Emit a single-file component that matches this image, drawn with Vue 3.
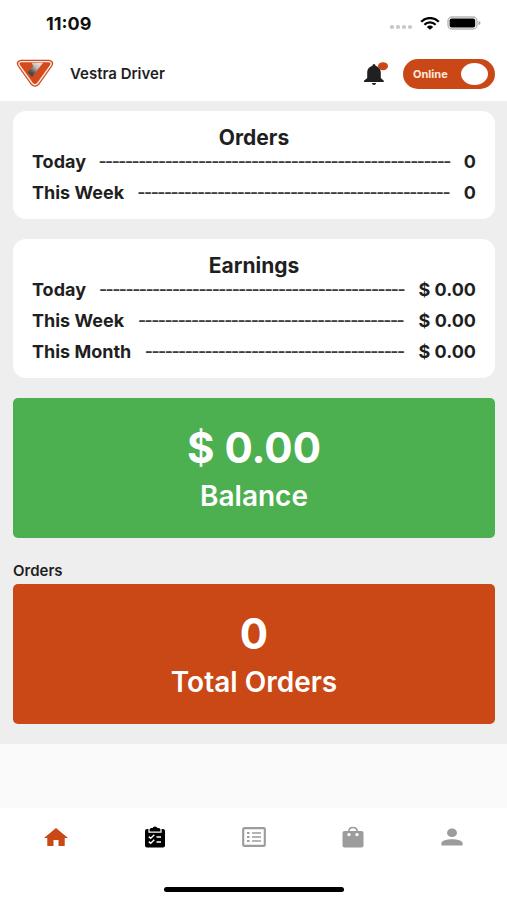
<script setup>
import { ref } from 'vue'

const online = ref(true)

const summaries = [
  {
    title: 'Orders',
    rows: [
      { label: 'Today', value: '0', dashes: 53 },
      { label: 'This Week', value: '0', dashes: 47 },
    ],
  },
  {
    title: 'Earnings',
    rows: [
      { label: 'Today', value: '$ 0.00', dashes: 46 },
      { label: 'This Week', value: '$ 0.00', dashes: 40 },
      { label: 'This Month', value: '$ 0.00', dashes: 39 },
    ],
  },
]
</script>

<template>
  <div class="app">
    <div class="status">
      <span class="time">11:09</span>
      <div class="signals">
        <svg width="24" height="6" viewBox="0 0 24 6" fill="#c9c9c9" aria-hidden="true">
          <ellipse cx="3" cy="3" rx="2.2" ry="2" />
          <ellipse cx="9" cy="3" rx="2.2" ry="2" />
          <ellipse cx="15" cy="3" rx="2.2" ry="2" />
          <ellipse cx="21" cy="3" rx="2.2" ry="2" />
        </svg>
        <svg class="wifi" width="20" height="13" viewBox="0 0 20 13" fill="none" stroke="#000" stroke-width="2.3" aria-hidden="true">
          <path d="M1.2 4.8C6-.2 14-.2 18.800 4.800" />
          <path d="M4.400 7.700C7.500 4.600 12.500 4.600 15.600 7.700" />
          <path d="M6.800 9.900Q10 7.300 13.200 9.900L10 12.800Z" fill="#000" stroke="none" />
        </svg>
        <svg class="battery" width="34" height="14" viewBox="0 0 34 14" aria-hidden="true">
          <rect x="1" y="1" width="29" height="12" rx="4" fill="#fff" stroke="#b5b5b5" stroke-width="1.400" />
          <rect x="2.600" y="2.600" width="25.600" height="8.800" rx="2" fill="#000" />
          <path d="M31.500 5Q33.500 5.500 33.500 7T31.500 9Z" fill="#a5a5a5" />
        </svg>
      </div>
    </div>

    <header class="header">
      <svg class="logo" width="38" height="29" viewBox="0 0 38 29" aria-hidden="true">
        <defs>
          <linearGradient id="sheen" x1="1" y1="0" x2="0.200" y2="1">
            <stop offset="0" stop-color="#f4f0ee" />
            <stop offset="0.400" stop-color="#c2bfbe" />
            <stop offset="0.720" stop-color="#5a5654" />
            <stop offset="1" stop-color="#3a3634" />
          </linearGradient>
        </defs>
        <path d="M5 .8H33Q39 1.800 36.400 7L23.500 25.200Q19 30.300 14.500 25.200L1.600 7Q-1 1.800 5 .8Z" fill="#cc4a1d" />
        <path d="M5.500 2.600H32.500Q36.500 3 34.600 6.500L22 24Q19 27.500 16 24L3.400 6.500Q1.500 3 5.500 2.600Z" fill="#d34a1c" stroke="#fbe9e3" stroke-width="1.400" />
        <path d="M15.500 3.800H27L16 18L11.500 13L17.500 7.500Z" fill="url(#sheen)" />
      </svg>
      <h1 class="brand">Vestra Driver</h1>
      <button class="bell" type="button" aria-label="Notifications">
        <svg width="26" height="24" viewBox="0 0 26 24" aria-hidden="true">
          <path d="M11 3.500C8.600 3.500 4.200 5.500 4.200 10.500V16L1 18.800V20H20.800V18.800L17.800 16V10.500C17.800 5.500 13.400 3.500 11 3.500Z" fill="#202020" />
          <path d="M9.600 3.600Q9.600 2 11 2T12.400 3.600L12.400 5H9.600Z" fill="#202020" />
          <path d="M8.800 21H13.200Q12.800 23 11 23T8.800 21Z" fill="#202020" />
          <ellipse cx="20" cy="4.200" rx="5" ry="4" fill="#cb4718" />
        </svg>
      </button>
      <label class="switch">
        <input v-model="online" class="check" type="checkbox" role="switch" />
        <span>{{ online ? 'Online' : 'Offline' }}</span>
        <span class="knob"></span>
      </label>
    </header>

    <main class="content">
      <section v-for="card in summaries" :key="card.title" class="card">
        <h2 class="title">{{ card.title }}</h2>
        <dl class="rows">
          <div v-for="row in card.rows" :key="row.label" class="row">
            <dt>{{ row.label }}</dt>
            <span class="leader" aria-hidden="true">{{ '-'.repeat(row.dashes) }}</span>
            <dd>{{ row.value }}</dd>
          </div>
        </dl>
      </section>

      <section class="tile balance">
        <strong class="figure">$ 0.00</strong>
        <span class="caption">Balance</span>
      </section>

      <section class="group">
        <h2 class="subtitle">Orders</h2>
        <div class="tile total">
          <strong class="figure">0</strong>
          <span class="caption">Total Orders</span>
        </div>
      </section>
    </main>

    <nav class="nav">
      <div class="tabs">
        <a href="#home" aria-label="Home">
          <svg width="26" height="20" viewBox="0 0 26 20" fill="#c94816" aria-hidden="true">
            <path d="M10.500 19V13H15.500V19H21.700V11H25L13 1L1 11H4.300V19Z" />
          </svg>
        </a>
        <a href="#tasks" aria-label="Tasks">
          <svg width="20" height="22" viewBox="0 0 20 22" aria-hidden="true">
            <rect x="0" y="3" width="20" height="18.500" rx="2" fill="#000" />
            <path d="M4 2.500V6.200H16V2.500" fill="none" stroke="#fff" stroke-width="1.200" />
            <path d="M5 5V3Q5 2 6.500 2H7.600Q8 .4 10 .4T12.400 2H13.500Q15 2 15 3V5Z" fill="#000" />
            <path d="M3.800 10.600L5.700 12.200L9.300 8.800M3.800 15.600L5.700 17.200L9.300 13.800M11.500 11H16M11.500 16H16" fill="none" stroke="#fff" stroke-width="1.400" />
          </svg>
        </a>
        <a href="#list" aria-label="Order list">
          <svg width="24" height="20" viewBox="0 0 24 20" fill="none" stroke="#9c9c9c" aria-hidden="true">
            <rect x="1.200" y="1.100" width="21.600" height="17.800" rx="1" stroke-width="2.100" />
            <path d="M10 6H19M10 10H19M10 14H19" stroke-width="1.700" />
            <path d="M5 6H7.500M5 10H7.500M5 14H7.500" stroke-width="1.800" />
          </svg>
        </a>
        <a href="#bag" aria-label="Shop">
          <svg width="22" height="22" viewBox="0 0 22 22" aria-hidden="true">
            <rect x=".5" y="5" width="21" height="16.500" rx="2" fill="#9c9c9c" />
            <path d="M6.800 8V5Q7 1.500 11 1.500T15.200 5V8" fill="none" stroke="#9c9c9c" stroke-width="1.700" />
            <ellipse cx="7" cy="8.600" rx="1.700" ry="1.600" fill="#fff" />
            <ellipse cx="15" cy="8.600" rx="1.700" ry="1.600" fill="#fff" />
          </svg>
        </a>
        <a href="#profile" aria-label="Profile">
          <svg width="22" height="18" viewBox="0 0 22 18" fill="#9c9c9c" aria-hidden="true">
            <ellipse cx="11" cy="4.700" rx="5" ry="4.300" />
            <path d="M.4 17.500V15.300C.4 12.400 6 11.200 11 11.200S21.600 12.400 21.600 15.300V17.500Z" />
          </svg>
        </a>
      </div>
      <div class="indicator"></div>
    </nav>
  </div>
</template>

<style>
body {
  margin: 0;
  background: #fafafa;
}
</style>

<style scoped>
.app {
  display: flex;
  flex-direction: column;
  min-height: 100vh;
  font-family: Inter, Roboto, sans-serif;
  font-weight: 600;
  color: #1f1f1f;
}

h1, h2, dl, dd {
  margin: 0;
  font-weight: inherit;
}

.status {
  display: flex;
  justify-content: space-between;
  align-items: center;
  height: 46px;
  padding: 0 26px 0 46px;
  background: #fff;
}

.time {
  font-size: 18px;
  font-weight: 700;
  color: #111;
}

.signals {
  display: flex;
  align-items: center;
  gap: 7px;
}

.signals svg:first-child {
  margin-top: 8px;
}

.header {
  display: flex;
  align-items: center;
  height: 55px;
  padding: 0 12px 0 16px;
  background: #fff;
}

.brand {
  flex: 1;
  margin-left: 16px;
  font-size: 15px;
}

.bell {
  display: flex;
  padding: 0;
  border: 0;
  background: none;
}

.switch {
  display: flex;
  align-items: center;
  justify-content: space-between;
  box-sizing: border-box;
  width: 92px;
  height: 30px;
  margin-left: 14px;
  padding: 0 7px 0 10px;
  border-radius: 15px;
  background: #c94816;
  color: #ffe9df;
  font-size: 11px;
  font-weight: 700;
}

.check {
  position: absolute;
  opacity: 0;
}

.knob {
  width: 27px;
  height: 22px;
  border-radius: 50%;
  background: #fff;
}

.content {
  display: flex;
  flex-direction: column;
  gap: 20px;
  padding: 10px 12px 20px 13px;
  background: #eee;
}

.card {
  padding: 15px 19px;
  border-radius: 13px;
  background: #fff;
}

.title {
  font-size: 21px;
  font-weight: 700;
  line-height: 24px;
  text-align: center;
}

.rows {
  display: flex;
  flex-direction: column;
  gap: 8px;
}

.row {
  display: flex;
  justify-content: space-between;
  font-size: 18px;
  font-weight: 700;
  line-height: 23px;
  white-space: nowrap;
}

.leader {
  font-family: Roboto, sans-serif;
  font-size: 24px;
  font-weight: 400;
  color: #3c3c3c;
}

.tile {
  display: flex;
  flex-direction: column;
  align-items: center;
  justify-content: center;
  height: 140px;
  border-radius: 5px;
  color: #fff;
}

.balance {
  background: #4caf50;
}

.total {
  background: #c94816;
}

.figure {
  font-size: 42px;
  font-weight: 700;
  line-height: 56px;
}

.caption {
  font-size: 28px;
  line-height: 40px;
}

.subtitle {
  font-size: 15px;
  line-height: 26px;
}

.nav {
  box-sizing: border-box;
  height: 92px;
  margin-top: auto;
  padding: 10px 6px 8px;
  display: flex;
  flex-direction: column;
  align-items: center;
  justify-content: space-between;
  background: #fff;
}

.tabs {
  display: grid;
  grid-template-columns: repeat(5, 1fr);
  width: 100%;
}

.tabs a {
  display: flex;
  align-items: center;
  justify-content: center;
  height: 38px;
}

.indicator {
  width: 180px;
  height: 5px;
  border-radius: 3px;
  background: #000;
}
</style>
